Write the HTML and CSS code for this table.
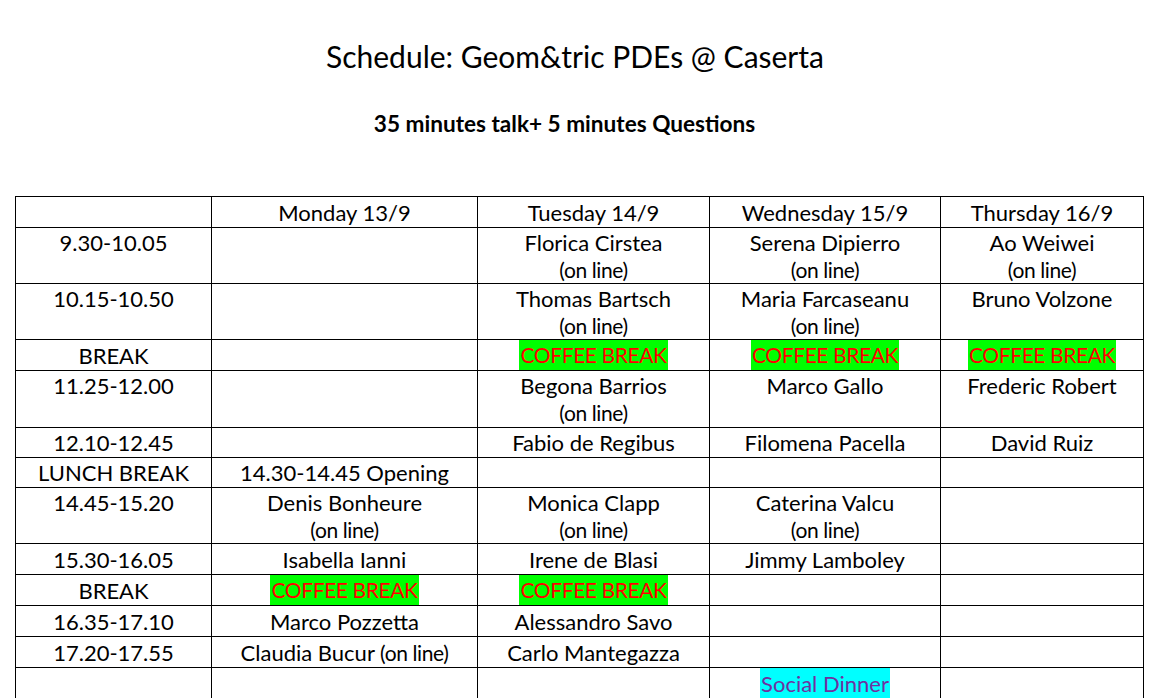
FILE: index.html
```html
<!DOCTYPE html>
<html>
<head>
<meta charset="utf-8">
<link rel="stylesheet" href="styles.css">
</head>
<body>
<div class="page">
  <h1 class="title">Schedule: Geom&amp;tric PDEs @ Caserta</h1>
  <p class="subtitle">35 minutes talk+ 5 minutes Questions</p>
  <table class="sched">
    <colgroup>
      <col class="c0"><col class="c1"><col class="c2"><col class="c3"><col class="c4">
    </colgroup>
    <tr class="h31">
      <td></td><td>Monday 13/9</td><td>Tuesday 14/9</td><td>Wednesday 15/9</td><td>Thursday 16/9</td>
    </tr>
    <tr class="h55">
      <td>9.30-10.05</td><td></td>
      <td>Florica Cirstea<br><span class="ol">(on line)</span></td>
      <td>Serena Dipierro<br><span class="ol">(on line)</span></td>
      <td>Ao Weiwei<br><span class="ol">(on line)</span></td>
    </tr>
    <tr class="h56">
      <td>10.15-10.50</td><td></td>
      <td>Thomas Bartsch<br><span class="ol">(on line)</span></td>
      <td>Maria Farcaseanu<br><span class="ol">(on line)</span></td>
      <td>Bruno Volzone</td>
    </tr>
    <tr class="h31 brk">
      <td>BREAK</td><td></td>
      <td><span class="coffee">COFFEE BREAK</span></td>
      <td><span class="coffee">COFFEE BREAK</span></td>
      <td><span class="coffee">COFFEE BREAK</span></td>
    </tr>
    <tr class="h57">
      <td>11.25-12.00</td><td></td>
      <td>Begona Barrios<br><span class="ol">(on line)</span></td>
      <td>Marco Gallo</td>
      <td>Frederic Robert</td>
    </tr>
    <tr class="h30">
      <td>12.10-12.45</td><td></td>
      <td>Fabio de Regibus</td><td>Filomena Pacella</td><td>David Ruiz</td>
    </tr>
    <tr class="h30">
      <td>LUNCH BREAK</td><td>14.30-14.45 Opening</td><td></td><td></td><td></td>
    </tr>
    <tr class="h56">
      <td>14.45-15.20</td>
      <td>Denis Bonheure<br><span class="ol">(on line)</span></td>
      <td>Monica Clapp<br><span class="ol">(on line)</span></td>
      <td>Caterina Valcu<br><span class="ol">(on line)</span></td>
      <td></td>
    </tr>
    <tr class="h31">
      <td>15.30-16.05</td><td>Isabella Ianni</td><td>Irene de Blasi</td><td>Jimmy Lamboley</td><td></td>
    </tr>
    <tr class="h31 brk">
      <td>BREAK</td>
      <td><span class="coffee">COFFEE BREAK</span></td>
      <td><span class="coffee">COFFEE BREAK</span></td>
      <td></td><td></td>
    </tr>
    <tr class="h31">
      <td>16.35-17.10</td><td>Marco Pozzetta</td><td>Alessandro Savo</td><td></td><td></td>
    </tr>
    <tr class="h31">
      <td>17.20-17.55</td><td>Claudia Bucur <span class="ol">(on line)</span></td><td>Carlo Mantegazza</td><td></td><td></td>
    </tr>
    <tr class="h31 brk">
      <td></td><td></td><td></td>
      <td><span class="dinner">Social Dinner</span></td><td></td>
    </tr>
  </table>
</div>
</body>
</html>
```

FILE: styles.css
```css
html, body {
  margin: 0;
  padding: 0;
  background: #ffffff;
}

body {
  font-family: Lato, "Open Sans", sans-serif;
  color: #000000;
  overflow: hidden;
}

.page {
  width: 1150px;
  height: 698px;
  overflow: hidden;
}

.title {
  margin: 0;
  padding-top: 37px;
  text-align: center;
  font-weight: 400;
  font-size: 30px;
  line-height: 38px;
}

.subtitle {
  margin: 0;
  padding-top: 37px;
  padding-right: 21px;
  text-align: center;
  font-weight: 700;
  font-size: 22.6px;
  line-height: 24px;
}

.sched {
  margin: 60px 0 0 15px;
  border-collapse: collapse;
  table-layout: fixed;
  width: 1128px;
  font-size: 22px;
}

.c0 { width: 196px; }
.c1 { width: 266px; }
.c2 { width: 232px; }
.c3 { width: 231px; }
.c4 { width: 203px; }

.sched td {
  border: 1.5px solid #000000;
  text-align: center;
  vertical-align: top;
  padding: 2px 4px 0;
  line-height: 27px;
  white-space: nowrap;
}

.h30 td { height: 28px; padding-top: 1px; }
.h31 td { height: 28px; }
.h55 td { height: 52px; padding-top: 1px; }
.h56 td { height: 54px; padding-top: 1px; }
.h57 td { height: 55px; padding-top: 1px; }
.brk td { vertical-align: middle; padding-top: 0; height: 30px; }

.ol {
  font-size: 21px;
  letter-spacing: -0.4px;
}

.coffee {
  display: inline-block;
  background: #00ff00;
  color: #ff0000;
  font-size: 21px;
  line-height: 30px;
  letter-spacing: -0.4px;
  padding: 0 1px;
}

.dinner {
  display: inline-block;
  background: #00ffff;
  color: #7030a0;
  font-size: 22px;
  line-height: 32px;
  padding: 0 1px;
}
```
